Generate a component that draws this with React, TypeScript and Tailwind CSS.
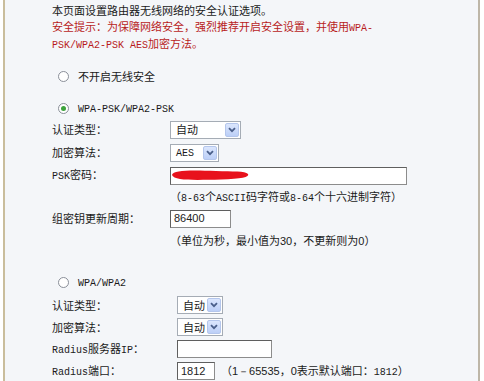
import type { ReactNode } from "react";

const cjk = "font-['Noto_Sans_CJK_SC','Noto_Sans',sans-serif]";

function M({ children }: { children: ReactNode }) {
  return <span className="font-['Liberation_Mono',monospace] text-[10px] leading-none">{children}</span>;
}

function S({ children }: { children: ReactNode }) {
  return <span className="font-['Liberation_Sans',sans-serif] leading-none">{children}</span>;
}

function Radio({ checked, children }: { checked?: boolean; children: ReactNode }) {
  return (
    <div className="flex items-center h-full pl-[6px]">
      <span className="w-[11px] h-[11px] rounded-full border border-[#8a8f99] bg-white flex items-center justify-center">
        {checked && <span className="w-[5px] h-[5px] rounded-full bg-[#3da33d]" />}
      </span>
      <span className="ml-[9px] leading-none">{children}</span>
    </div>
  );
}

function Select({ value, width }: { value: ReactNode; width: string }) {
  return (
    <div className={`${width} h-[18px] border border-[#a5acb5] bg-white flex items-center justify-between pl-[5px] pr-[1px]`}>
      <span className="leading-none">{value}</span>
      <span className="w-[14px] h-[14px] bg-gradient-to-b from-[#dbe6fd] to-[#bccff7] border border-[#b4c6ec] rounded-[2px] flex items-center justify-center">
        <svg width="8" height="6" viewBox="0 0 8 6">
          <path d="M1 1.2 L4 4.2 L7 1.2" fill="none" stroke="#4a5f8a" strokeWidth="1.8" />
        </svg>
      </span>
    </div>
  );
}

function Input({ width, value, children }: { width: string; value?: string; children?: ReactNode }) {
  return (
    <div className={`${width} h-[18px] bg-white border border-[#8c8c8c] border-t-[#5f5f5f] border-l-[#5f5f5f] flex items-center pl-[3px] relative overflow-hidden`}>
      {value && <span className="font-['Liberation_Sans',sans-serif] text-[11px] leading-none text-[#222]">{value}</span>}
      {children}
    </div>
  );
}

function Row({ label, children, h = "h-[23px]", col = "w-[118px]" }: { label: ReactNode; children: ReactNode; h?: string; col?: string }) {
  return (
    <div className={`flex items-center ${h}`}>
      <div className={`${col} leading-none`}>{label}</div>
      {children}
    </div>
  );
}

export default function App() {
  return (
    <div className={`w-[484px] h-[381px] bg-white overflow-hidden ${cjk} text-[11px] text-[#1a1a1a]`}>
      <div className="ml-[3px] w-[477px] h-full bg-[#f4f6f9] border-l-2 border-[#c9bd9c] border-r-2 border-r-[#bdb6a8] pl-[47px]">
        <div className="pt-[2px]">
          <p className="h-[17px] flex items-center leading-none">本页面设置路由器无线网络的安全认证选项。</p>
          <p className="h-[17px] flex items-center leading-none text-[#b81c1c]">
            <span>安全提示：为保障网络安全，强烈推荐开启安全设置，并使用<M>WPA-</M></span>
          </p>
          <p className="h-[17px] flex items-center leading-none text-[#b81c1c]">
            <span><M>PSK/WPA2-PSK AES</M>加密方法。</span>
          </p>
        </div>

        <div className="mt-[13px] h-[20px]">
          <Radio>不开启无线安全</Radio>
        </div>
        <div className="mt-[12px] h-[20px]">
          <Radio checked>
            <M>WPA-PSK/WPA2-PSK</M>
          </Radio>
        </div>

        <Row label="认证类型：">
          <Select value="自动" width="w-[71px]" />
        </Row>
        <Row label="加密算法：">
          <Select value={<M>AES</M>} width="w-[49px]" />
        </Row>
        <Row label={<><M>PSK</M>密码：</>}>
          <Input width="w-[237px]">
            <svg className="absolute left-0 top-[1px]" width="80" height="13" viewBox="0 0 80 13">
              <path d="M1 6 C2 1 20 1 45 2 C62 2.5 74 2 77 5 C79 8 70 10 50 10.5 C25 11 3 12 1 6 Z" fill="#e8121c" />
            </svg>
          </Input>
        </Row>
        <div className="h-[20px] flex items-center pl-[118px] leading-none">
          <span>（<M>8-63</M>个<M>ASCII</M>码字符或<M>8-64</M>个十六进制字符）</span>
        </div>
        <Row label="组密钥更新周期：">
          <Input width="w-[61px]" value="86400" />
        </Row>
        <div className="h-[22px] flex items-center pl-[118px] leading-none">
          <span>（单位为秒，最小值为<S>30</S>，不更新则为<S>0</S>）</span>
        </div>

        <div className="mt-[20px] h-[20px]">
          <Radio>
            <M>WPA/WPA2</M>
          </Radio>
        </div>
        <div className="mt-[2px]">
          <Row label="认证类型：" h="h-[22px]" col="w-[125px]">
            <Select value="自动" width="w-[46px]" />
          </Row>
          <Row label="加密算法：" h="h-[22px]" col="w-[125px]">
            <Select value="自动" width="w-[46px]" />
          </Row>
          <Row label={<><M>Radius</M>服务器<M>IP</M>：</>} h="h-[22px]" col="w-[125px]">
            <Input width="w-[95px]" />
          </Row>
          <Row label={<><M>Radius</M>端口：</>} h="h-[22px]" col="w-[125px]">
            <Input width="w-[38px]" value="1812" />
            <span className="ml-[6px] leading-none">
              （<S>1－65535</S>，<S>0</S>表示默认端口：<M>1812</M>）
            </span>
          </Row>
        </div>
      </div>
    </div>
  );
}
